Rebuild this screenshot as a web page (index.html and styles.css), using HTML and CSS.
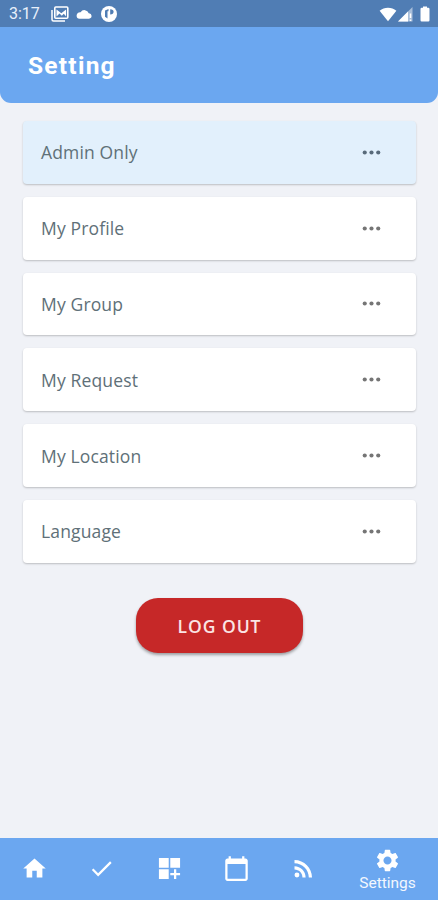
FILE: index.html
```html
<!DOCTYPE html>
<html lang="en">
<head>
<meta charset="utf-8">
<title>Setting</title>
<link rel="stylesheet" href="styles.css">
</head>
<body>
<svg width="0" height="0" class="defs"><symbol id="more" viewBox="0 0 24 24"><circle cx="6" cy="12" r="1.850"/><circle cx="12" cy="12" r="1.850"/><circle cx="18" cy="12" r="1.850"/></symbol></svg>
<div class="screen">
  <div class="status">
    <span class="time">3:17</span>
    <svg class="s-photo" width="18" height="16" viewBox="0 0 18 16"><path d="M1 4v9.500Q1 15 2.500 15H14" fill="none" stroke="#fff" stroke-width="1.500"/><rect x="3.800" y="1" width="13" height="11.300" rx="1" fill="none" stroke="#fff" stroke-width="1.600"/><path d="M5.500 10.500V3.500l4.800 3.800 4.800-3.800v7l-2.300-2.700-2 2-2.300-2.200z" fill="#fff"/></svg>
    <svg class="s-cloud" width="16" height="16" viewBox="0 0 16 16" fill="#fff"><path d="M12.700 7.300A4.500 4.500 0 0 0 4.600 6.200 3.500 3.500 0 0 0 .6 9.700 3.100 3.100 0 0 0 3.500 12.700H13a2.700 2.700 0 0 0-.3-5.400z"/></svg>
    <svg class="s-app" width="16" height="16" viewBox="0 0 16 16"><circle cx="8" cy="8" r="8" fill="#fff"/><path d="M4 4.500 7.500 3v2.200h-1v7.300L4 10.800z" fill="#507db4"/><path d="M9.200 3.200c2.300 0 3.400 1 3.400 2.600S11.500 8.500 9.200 8.500z" fill="#507db4"/></svg>
    <span class="grow"></span>
    <svg class="s-wifi" width="18" height="15" viewBox="0 0 18 15" fill="#fff"><path d="M9 14.300.6 3.700C3 1.700 5.900.7 9 .7s6 1 8.400 3z"/></svg>
    <svg class="s-signal" width="15" height="15" viewBox="0 0 15 15"><path d="M0 14.500 14.500 0v14.500z" fill="#fff" opacity=".5"/><path d="M0 14.500 10 4.500v10z" fill="#fff"/><path d="M12.500 6.500v4.500m0 1.500v1.500" stroke="#fff" stroke-width="1.500"/></svg>
    <svg class="s-battery" width="10" height="16" viewBox="0 0 10 16" fill="#fff"><path d="M3 .5h4v1.300h1.300q1.200 0 1.200 1.200v11.300q0 1.200-1.200 1.200H1.700Q.5 15.500.5 14.300V3q0-1.200 1.200-1.200H3z"/></svg>
  </div>
  <header class="header"><h1>Setting</h1></header>
  <main class="content">
    <div class="card admin"><span>Admin Only</span><svg class="more"><use href="#more"/></svg></div>
    <div class="card"><span>My Profile</span><svg class="more"><use href="#more"/></svg></div>
    <div class="card"><span>My Group</span><svg class="more"><use href="#more"/></svg></div>
    <div class="card"><span>My Request</span><svg class="more"><use href="#more"/></svg></div>
    <div class="card"><span>My Location</span><svg class="more"><use href="#more"/></svg></div>
    <div class="card"><span>Language</span><svg class="more"><use href="#more"/></svg></div>
    <button class="logout">LOG OUT</button>
  </main>
  <nav class="nav">
    <a class="tab"><svg viewBox="0 0 24 24"><path d="M10 20v-6h4v6h5v-8h3L12 3 2 12h3v8z"/></svg></a>
    <a class="tab"><svg viewBox="0 0 24 24"><path d="M9 16.200 4.800 12l-1.400 1.400L9 19 21 7l-1.400-1.400z"/></svg></a>
    <a class="tab"><svg viewBox="0 0 24 24"><path d="M2.600 2.600h8.700v8.700H2.600zM12.700 2.600h8.700v8.700h-8.700zM2.600 12.700h8.700v8.700H2.600zM18 12.700h-2v3.300h-3.300v2H16v3.400h2V18h3.400v-2H18z"/></svg></a>
    <a class="tab"><svg viewBox="0 0 24 24"><path d="M20 3h-1V1h-2v2H7V1H5v2H4c-1.100 0-2 .9-2 2v16c0 1.100.9 2 2 2h16c1.100 0 2-.9 2-2V5c0-1.100-.9-2-2-2zm0 18H4V8h16v13z"/></svg></a>
    <a class="tab"><svg viewBox="0 0 24 24"><circle cx="6.180" cy="17.820" r="2.180"/><path d="M4 4.440v2.830c7.030 0 12.730 5.700 12.730 12.730h2.830c0-8.590-6.970-15.560-15.560-15.560zm0 5.660v2.830c3.900 0 7.070 3.170 7.070 7.070h2.830c0-5.470-4.430-9.900-9.900-9.900z"/></svg></a>
    <a class="tab active"><svg viewBox="0 0 24 24"><path d="M19.140 12.940c.04-.3.060-.61.060-.94 0-.32-.02-.64-.07-.94l2.030-1.580c.18-.14.230-.41.120-.61l-1.920-3.320c-.12-.22-.37-.29-.59-.22l-2.390.96c-.5-.38-1.030-.7-1.620-.94l-.36-2.540c-.04-.24-.24-.41-.48-.41h-3.840c-.24 0-.43.170-.47.410l-.36 2.540c-.59.240-1.130.57-1.620.94l-2.390-.96c-.22-.08-.47 0-.59.220L2.740 8.870c-.12.210-.08.470.12.610l2.030 1.580c-.05.300-.09.630-.09.940s.02.640.07.940l-2.030 1.580c-.18.140-.23.410-.12.610l1.920 3.320c.12.220.37.290.59.220l2.390-.96c.5.380 1.030.7 1.620.94l.36 2.540c.05.240.24.410.48.410h3.840c.24 0 .44-.17.470-.41l.36-2.540c.59-.24 1.130-.56 1.620-.94l2.390.96c.22.080.47 0 .59-.22l1.920-3.320c.12-.22.070-.47-.12-.61l-2.010-1.580zM12 15.600c-1.980 0-3.600-1.620-3.600-3.600s1.620-3.600 3.600-3.600 3.600 1.620 3.600 3.600-1.620 3.600-3.600 3.600z"/></svg><span>Settings</span></a>
  </nav>
</div>
</body>
</html>
```
FILE: styles.css
```css
* { box-sizing: border-box; }
body { margin: 0; background: #f0f2f7; }
.defs { display: none; }
.screen {
  width: 438px;
  height: 900px;
  display: flex;
  flex-direction: column;
  overflow: hidden;
  font-family: Roboto, sans-serif;
}
.status {
  height: 27px;
  flex: none;
  display: flex;
  align-items: center;
  padding: 1px 8px 0 9px;
  background: #507db4;
}
.time { width: 42px; font-size: 16px; line-height: 20px; color: #e8f0fb; }
.s-cloud { margin-left: 7px; }
.s-app { margin-left: 9px; }
.grow { flex: 1; }
.s-signal { margin-left: 1px; }
.s-battery { margin-left: 7px; }
.header {
  height: 75.500px;
  flex: none;
  display: flex;
  align-items: center;
  padding: 3px 28px 0;
  background: #6ba7f0;
  border-radius: 0 0 11px 11px;
}
.header h1 {
  margin: 0;
  font-size: 24.500px;
  line-height: 30px;
  font-weight: 700;
  letter-spacing: 1.250px;
  color: #fff;
}
.content {
  flex: 1;
  display: flex;
  flex-direction: column;
  padding: 18.500px 22px 0 23px;
}
.card {
  height: 62.800px;
  flex: none;
  margin-bottom: 13px;
  padding: 0 31px 0 18px;
  display: flex;
  align-items: center;
  justify-content: space-between;
  background: #fff;
  border-radius: 4px;
  box-shadow: 0 1px 2px rgba(0, 0, 0, .22);
  font-family: "Open Sans", sans-serif;
  font-size: 17.500px;
  letter-spacing: .15px;
  color: #607078;
}
.admin { background: #e2f0fc; }
.more { width: 27px; height: 27px; fill: #757575; }
.admin .more { fill: #586a7a; }
.logout {
  align-self: center;
  width: 167px;
  height: 55px;
  margin: 22.500px 0 0;
  padding: 0;
  border: 0;
  border-radius: 22px;
  background: #c62828;
  box-shadow: 0 2px 3px rgba(0, 0, 0, .35);
  font-family: "Open Sans", sans-serif;
  font-size: 17.500px;
  font-weight: 650;
  letter-spacing: .95px;
  color: #fbe4e4;
}
.nav {
  height: 62px;
  flex: none;
  display: flex;
  padding-left: 1px;
  background: #6ba7f0;
}
.tab {
  flex: 1 1 0;
  display: flex;
  flex-direction: column;
  align-items: center;
  justify-content: center;
  padding-bottom: 2px;
}
.tab svg { width: 27px; height: 27px; fill: #fff; }
.tab.active { flex: 0 0 101px; justify-content: flex-start; padding-top: 9px; }
.tab span { font-size: 15.500px; line-height: 18px; color: #f2f7fe; }
```
